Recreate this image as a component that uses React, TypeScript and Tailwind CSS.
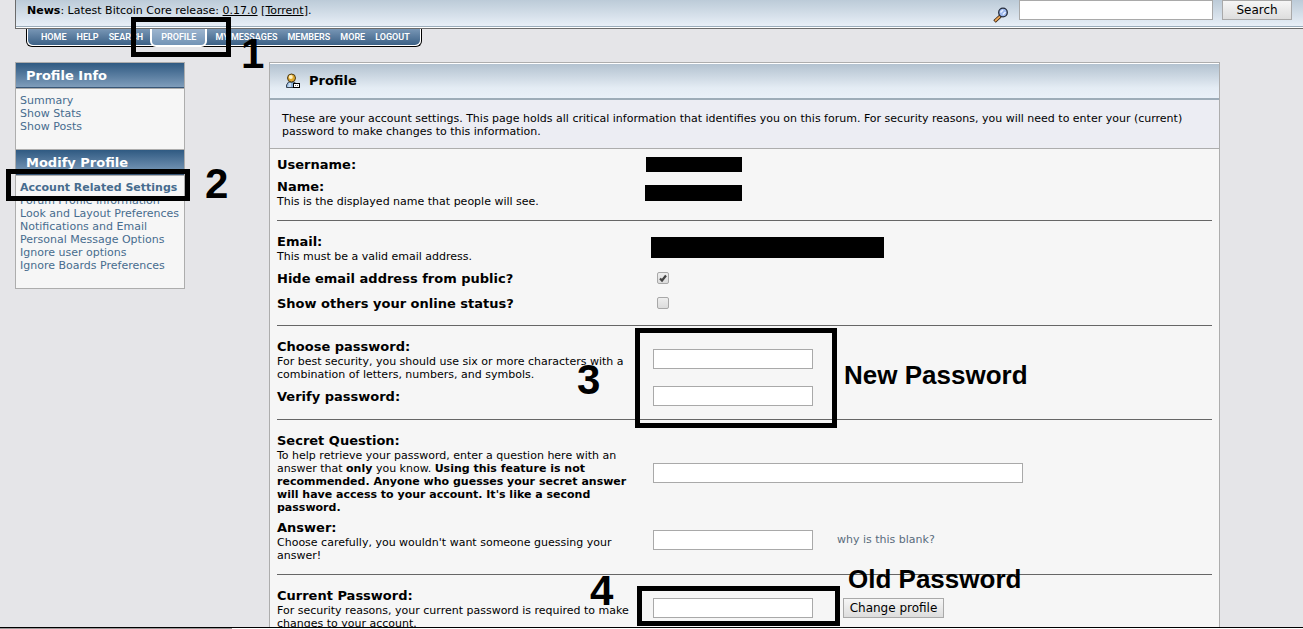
import { useState } from 'react';
import type { ReactNode } from 'react';

const tabs = ['Home', 'Help', 'Search', 'Profile', 'My Messages', 'Members', 'More', 'Logout'];

const sections = [
  { title: 'Profile Info', links: ['Summary', 'Show Stats', 'Show Posts'] },
  {
    title: 'Modify Profile',
    links: [
      'Account Related Settings',
      'Forum Profile Information',
      'Look and Layout Preferences',
      'Notifications and Email',
      'Personal Message Options',
      'Ignore user options',
      'Ignore Boards Preferences',
    ],
  },
];

const inputClass = 'h-5 border border-[#a9a9a9] bg-white px-1 text-[13px] outline-none';
const buttonClass =
  'h-5 border border-[#a9a9a9] bg-linear-to-b from-[#f6f6f6] to-[#dddddd] text-[12px] leading-4 text-black';

const PersonIcon = () => (
  <svg width="16" height="16" viewBox="0 0 16 16" aria-hidden="true">
    <path d="M1.5 14.5 V12 L3.5 9 H9 L11.500 11 V14.500 Z" fill="#8fb4dc" stroke="#3a4654" />
    <path d="M4 10 H6 V14 H3 Z" fill="#c9def2" />
    <circle cx="6.500" cy="5" r="4" fill="#e0a92c" stroke="#4a3a1a" />
    <circle cx="5.800" cy="4" r="2" fill="#fff0c0" />
    <rect x="8.500" y="10.500" width="6" height="4" fill="#fff" stroke="#000" />
    <path d="M10 12h1v1h-1zM12 12h1v1h-1z" fill="#777" />
  </svg>
);

const SearchIcon = () => (
  <svg width="16" height="16" viewBox="0 0 16 16" aria-hidden="true">
    <path d="M1.500 14.500 L7.500 9" stroke="#3a2412" strokeWidth="3.600" />
    <path d="M2 14 L7 9.400" stroke="#f0aa58" strokeWidth="1.800" />
    <circle cx="10" cy="5.500" r="4.300" fill="#9db8ee" stroke="#222a3a" strokeWidth="1.300" />
    <path d="M7.500 5.500 L10 3 M10 7.500 L12.500 5" stroke="#e6efff" strokeWidth="1.600" />
  </svg>
);

const Row = ({ label, htmlFor, hint, children }: {
  label: string;
  htmlFor?: string;
  hint?: ReactNode;
  children: ReactNode;
}) => (
  <div className="grid grid-cols-[368px_1fr] items-center pt-[3px] pb-[2px]">
    <div className="pr-2">
      {htmlFor ? (
        <label htmlFor={htmlFor} className="block text-[13px] leading-[17px] font-bold">{label}</label>
      ) : (
        <div className="text-[13px] leading-[17px] font-bold">{label}</div>
      )}
      {hint && <p className="leading-[13px]">{hint}</p>}
    </div>
    <div className="mb-px flex items-center">{children}</div>
  </div>
);

const Rule = () => <hr className="mt-[10px] mb-[9px] border-[#666666]" />;

const Check = ({ id, checked, onChange }: { id: string; checked: boolean; onChange: () => void }) => (
  <span className="relative ml-3 flex h-[19px] items-center">
    <input
      id={id}
      type="checkbox"
      checked={checked}
      onChange={onChange}
      className="h-3 w-3 appearance-none rounded-xs border border-[#a8a8a8] bg-linear-to-b from-[#eeeeee] to-[#dcdcdc]"
    />
    {checked && (
      <svg className="pointer-events-none absolute left-0" width="12" height="12" viewBox="0 0 12 12">
        <path d="M3 6.500 L5 8.500 L9 3.500" fill="none" stroke="#444" strokeWidth="2.200" />
      </svg>
    )}
  </span>
);

const Header = () => (
  <header>
    <div className="ml-[15px] flex h-[29px] items-start justify-between border-b border-l border-[#6b6b6b] bg-white pb-px">
      <div className="flex h-[27px] w-full items-start justify-between border-b border-[#9aacba] bg-linear-to-b from-[#bccbd8] to-[#e8eff7] pr-[11px] pl-[11px]">
        <p className="pt-1 text-[11px] leading-[14px]">
          <b>News</b>: Latest Bitcoin Core release: <a href="#release" className="underline">0.17.0</a> [
          <a href="#torrent" className="underline">Torrent</a>].
        </p>
        <form className="flex items-start" onSubmit={(e) => e.preventDefault()}>
          <span className="mt-[7px] mr-[10px]"><SearchIcon /></span>
          <input aria-label="Search" className={`${inputClass} mr-[9px] w-[194px]`} />
          <button className={`${buttonClass} w-[70px]`}>Search</button>
        </form>
      </div>
    </div>
    <nav className="ml-[26px] flex h-[18px] w-[396px] rounded-b-md border border-t-0 border-black bg-white px-px pb-px">
      <div className="flex w-full rounded-b-[5px] bg-linear-to-b from-[#7896b5] to-[#3c6186] pl-2 font-[Roboto,sans-serif] text-[9px] font-semibold text-white uppercase">
        {tabs.map((tab) =>
          tab === 'Profile' ? (
            <a key={tab} href="#profile" className="mr-[3px] ml-[2px] h-[18px] rounded-b-md border-x-2 border-b-2 border-white bg-linear-to-b from-[#9db5cf] to-[#7293b5] px-[9px] leading-4">
              {tab}
            </a>
          ) : (
            <a key={tab} href={`#${tab}`} className="px-[5px] leading-4 whitespace-nowrap">{tab}</a>
          )
        )}
      </div>
    </nav>
  </header>
);

const Sidebar = () => (
  <aside className="w-[170px] shrink-0 self-start border border-[#adadad] bg-[#f6f6f6]">
    {sections.map((section, i) => (
      <section key={section.title} className={i > 0 ? 'border-t border-[#adadad]' : ''}>
        <h2 className="h-[25px] border-b border-[#375576] bg-linear-to-b from-[#2f5a82] to-[#7f9dbb] pl-[10px] text-[13px] leading-[25px] font-bold text-white">
          {section.title}
        </h2>
        <ul className="border-t border-[#adadad] pt-[5px] pr-px pb-4 pl-1 leading-[13px] whitespace-nowrap text-[#476c8e]">
          {section.links.map((link) => (
            <li key={link}>
              <a href="#profile" className={link.startsWith('Account') ? 'font-bold' : ''}>{link}</a>
            </li>
          ))}
        </ul>
      </section>
    ))}
  </aside>
);

const AccountForm = () => {
  const [hideEmail, setHideEmail] = useState(true);
  const [showOnline, setShowOnline] = useState(false);

  return (
    <main className="mr-[83px] ml-[84px] flex-1 border border-[#adadad] bg-[#f6f6f6]">
      <h1 className="flex h-[37px] items-center border-t border-b-2 border-t-white border-b-[#9dacb8] bg-linear-to-b from-[#b3c2d0] via-[#e4ecf4] via-70% to-[#e9f0f8] pl-[15px] text-[13px] font-bold">
        <PersonIcon />
        <span className="ml-2">Profile</span>
      </h1>
      <p className="border-b border-[#adadad] bg-[#ecedf3] px-3 pt-3 pb-[10px] leading-[13px]">
        These are your account settings. This page holds all critical information that identifies you on this forum. For
        security reasons, you will need to enter your (current) password to make changes to this information.
      </p>
      <form className="px-[7px] pt-1" onSubmit={(e) => e.preventDefault()}>
        <Row label="Username:"><div className="ml-px h-[15px] w-24 bg-black" /></Row>
        <Row label="Name:" hint="This is the displayed name that people will see.">
          <div className="h-4 w-[97px] bg-black" />
        </Row>
        <Rule />
        <Row label="Email:" hint="This must be a valid email address.">
          <div className="ml-[6px] h-[21px] w-[233px] bg-black" />
        </Row>
        <Row label="Hide email address from public?" htmlFor="hide-email">
          <Check id="hide-email" checked={hideEmail} onChange={() => setHideEmail(!hideEmail)} />
        </Row>
        <Row label="Show others your online status?" htmlFor="show-online">
          <Check id="show-online" checked={showOnline} onChange={() => setShowOnline(!showOnline)} />
        </Row>
        <Rule />
        <Row
          label="Choose password:"
          htmlFor="password"
          hint="For best security, you should use six or more characters with a combination of letters, numbers, and symbols."
        >
          <input id="password" type="password" className={`${inputClass} ml-2 w-40`} />
        </Row>
        <Row label="Verify password:" htmlFor="verify">
          <input id="verify" type="password" className={`${inputClass} ml-2 w-40`} />
        </Row>
        <Rule />
        <Row
          label="Secret Question:"
          htmlFor="question"
          hint={
            <>
              To help retrieve your password, enter a question here with an answer that <b>only</b> you know.{' '}
              <b>
                Using this feature is not recommended. Anyone who guesses your secret answer will have access to your
                account. It's like a second password.
              </b>
            </>
          }
        >
          <input id="question" className={`${inputClass} ml-2 w-[370px]`} />
        </Row>
        <Row label="Answer:" htmlFor="answer" hint="Choose carefully, you wouldn't want someone guessing your answer!">
          <input id="answer" className={`${inputClass} ml-2 w-40`} />
          <a href="#blank" className="ml-6 text-[#5a6c7d]">why is this blank?</a>
        </Row>
        <Rule />
        <Row
          label="Current Password:"
          htmlFor="current"
          hint="For security reasons, your current password is required to make changes to your account."
        >
          <input id="current" type="password" className={`${inputClass} ml-2 w-40`} />
          <button className={`${buttonClass} ml-[30px] w-[101px]`}>Change profile</button>
        </Row>
      </form>
    </main>
  );
};

// Marker boxes and step numbers drawn over the page
const Annotations = () => (
  <div className="pointer-events-none absolute inset-0 font-['Liberation_Sans',sans-serif] leading-none font-bold">
    <div className="absolute top-[17px] left-[131px] h-10 w-[100px] border-[5px] border-black" />
    <div className="absolute top-[169px] left-[6px] h-8 w-[184px] border-[5px] border-black" />
    <div className="absolute top-[328px] left-[635px] h-[100px] w-[202px] border-[5px] border-black" />
    <div className="absolute top-[586px] left-[637px] h-10 w-[203px] border-[5px] border-black" />
    <span className="absolute top-[33px] left-[241px] text-[42px]">1</span>
    <span className="absolute top-[163px] left-[205px] text-[42px]">2</span>
    <span className="absolute top-[359px] left-[577px] text-[42px]">3</span>
    <span className="absolute top-[570px] left-[590px] text-[42px]">4</span>
    <span className="absolute top-[362px] left-[844px] text-[26px]">New Password</span>
    <span className="absolute top-[566px] left-[848px] text-[26px]">Old Password</span>
  </div>
);

const App = () => (
  <div className="relative flex h-screen flex-col overflow-hidden bg-[#e5e5e8] font-['DejaVu_Sans',sans-serif] text-[11px] text-black">
    <div className="min-h-0 flex-1 overflow-hidden">
      <Header />
      <div className="mt-[15px] flex pl-[15px]">
        <Sidebar />
        <AccountForm />
      </div>
    </div>
    <footer className="flex h-[2px] border-t border-black bg-white">
      <div className="w-[232px] bg-[#999999]" />
    </footer>
    <Annotations />
  </div>
);

export default App;
